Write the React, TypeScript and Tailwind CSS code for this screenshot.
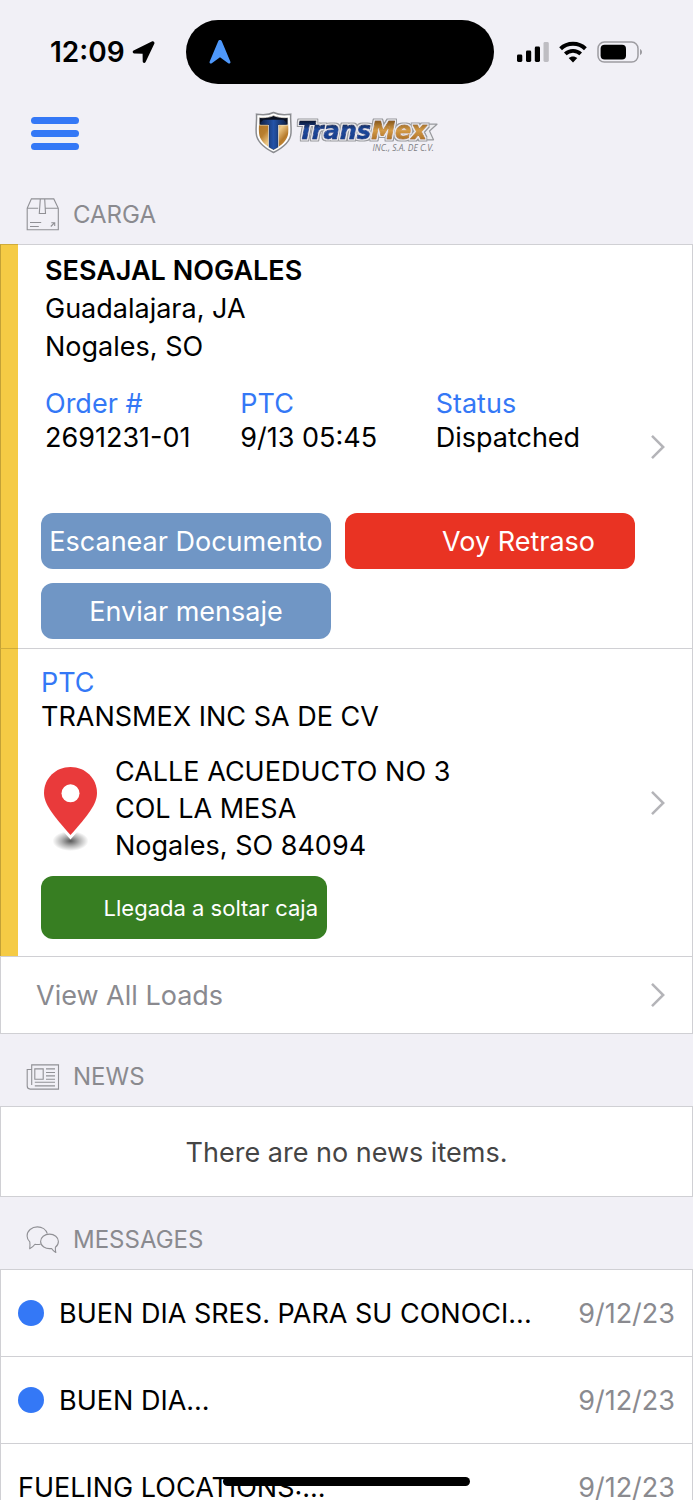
import type { ReactNode } from "react";

function LocationArrow() {
  return (
    <svg viewBox="0 0 24 24" className="h-6 w-6" fill="#000" aria-hidden="true">
      <path d="M1.600 10.600 19.800 1.400c1.700-.8 3.100.6 2.500 2.300L13.600 21.900c-.8 1.600-2.900 1.200-2.900-.7l-.1-7.400-7.800-.2c-2-.1-2.900-2-1.200-3z" />
    </svg>
  );
}

function StatusBar() {
  return (
    <div className="grid h-[94px] grid-cols-[186fr_308fr_199fr] items-start pt-5">
      <div className="flex h-16 items-center gap-[7px] pl-[50px]">
        <span className="text-[28px] font-semibold leading-8">12:09</span>
        <LocationArrow />
      </div>
      <div className="flex h-16 items-center rounded-full bg-black pl-[22px]">
        <svg viewBox="0 0 24 26" className="h-[26px] w-6" fill="#4e98fb" aria-hidden="true">
          <path d="M10.2 2.3c.5-1.700 3-1.700 3.600 0l8.600 20.400c.5 1.500-1 2.400-2.200 1.600L12 18.200l-8.200 6.100c-1.200.8-2.700-.1-2.200-1.600z" />
        </svg>
      </div>
      <div className="flex h-16 items-center gap-[10px] pl-[23px]">
        <svg viewBox="0 0 32 22" className="h-[22px] w-8" aria-hidden="true">
          <rect x="0" y="13.5" width="5.3" height="7.5" rx="1.4" />
          <rect x="9" y="9.5" width="5.2" height="11.5" rx="1.4" />
          <rect x="17.8" y="5.5" width="5.2" height="15.5" rx="1.4" />
          <rect x="26.5" y="1" width="5.3" height="20" rx="1.4" fill="#bebdc2" />
        </svg>
        <svg viewBox="0 0 28 22" className="h-[22px] w-7" fill="none" stroke="#000" aria-hidden="true">
          <path d="M1.600 7.700C8.400 1.100 19.600 1.100 26.400 7.700" strokeWidth="4" />
          <path d="M6.300 12.900c4.300-4.100 11.100-4.100 15.400 0" strokeWidth="3.800" />
          <path d="M14 21.400l-4.300-4.300c2.400-2.100 6.200-2.100 8.600 0z" fill="#000" stroke="none" />
        </svg>
        <svg viewBox="0 0 46 22" className="h-[22px] w-[46px]" aria-hidden="true">
          <rect x="1" y="1.100" width="40" height="20" rx="6.300" fill="none" stroke="#9d9ca1" strokeWidth="1.500" />
          <rect x="3.600" y="3.700" width="25.400" height="14.800" rx="4" />
          <path d="M43 8v6.200c1.200-.5 2-1.700 2-3.100s-.8-2.600-2-3.100z" fill="#9d9ca1" />
        </svg>
      </div>
    </div>
  );
}

function Logo() {
  return (
    <svg viewBox="0 0 184 44" className="h-11 w-[184px]" role="img" aria-label="TransMex Inc., S.A. de C.V.">
      <defs>
        <linearGradient id="gold" x1="0" y1="0" x2="1" y2="1">
          <stop offset="0" stopColor="#a86f22" />
          <stop offset=".35" stopColor="#b97f2f" />
          <stop offset=".55" stopColor="#edc988" />
          <stop offset=".75" stopColor="#b67a2a" />
          <stop offset="1" stopColor="#d7a558" />
        </linearGradient>
        <linearGradient id="goldText" x1="0" y1="9" x2="0" y2="28" gradientUnits="userSpaceOnUse">
          <stop offset=".1" stopColor="#8f5f20" />
          <stop offset=".55" stopColor="#d49b45" />
          <stop offset="1" stopColor="#b0752a" />
        </linearGradient>
        <linearGradient id="navyText" x1="0" y1="9" x2="0" y2="28" gradientUnits="userSpaceOnUse">
          <stop offset=".1" stopColor="#0d1c3e" />
          <stop offset=".5" stopColor="#1e4a9c" />
          <stop offset="1" stopColor="#173e8b" />
        </linearGradient>
        <linearGradient id="bar" x1="0" y1="0" x2="1" y2="0">
          <stop offset="0" stopColor="#0f2146" />
          <stop offset=".5" stopColor="#2453a8" />
          <stop offset="1" stopColor="#0f2146" />
        </linearGradient>
        <filter id="rim" x="-5%" y="-20%" width="110%" height="140%">
          <feMorphology in="SourceAlpha" operator="dilate" radius="2" result="wide" />
          <feFlood floodColor="#98999d" />
          <feComposite in2="wide" operator="in" result="outer" />
          <feMorphology in="SourceAlpha" operator="dilate" radius="1" result="narrow" />
          <feFlood floodColor="#ececef" />
          <feComposite in2="narrow" operator="in" result="inner" />
          <feMerge>
            <feMergeNode in="outer" />
            <feMergeNode in="inner" />
            <feMergeNode in="SourceGraphic" />
          </feMerge>
        </filter>
      </defs>
      <path d="M18.500 1.500C14 4 7.500 4 1.500 3.200 2 9 .7 15 1.200 22c.5 9 7.300 14.500 17.300 19.500 10-5 17-10.500 17.500-19.500.5-7-.8-13-.3-18.800C30 4 23.500 4 18.500 1.500z" fill="#fff" stroke="#8b8c90" strokeWidth="1.500" />
      <path d="M18.500 4.600C14.500 6.500 9 7 4.200 6.500c.2 5-.7 10-.2 15.500.6 7.500 6 12 14.500 17 8.500-5 14-9.500 14.700-17 .5-5.500-.4-10.500-.2-15.500C28.500 7 23 6.500 18.500 4.600z" fill="url(#gold)" />
      <path d="M18.500 4.600C14.500 6.500 9 7 4.200 6.500V14h9.300v22c1.600 1.100 3.300 2.100 5 3 1.700-.9 3.400-1.900 5-3V14H33V6.500C28.500 7 23 6.500 18.500 4.600z" fill="#0a1020" stroke="#f3f2ee" strokeWidth=".7" />
      <path d="M5.500 11.500 8.500 8.800h20l3 2.700v2H22.900v22.700l-4.400 2.400-4.400-2.400V13.500H5.500z" fill="url(#bar)" />
      <path d="M166 13.200h16L174.500 20l4 8.800H164z" fill="#ececef" stroke="#98999d" strokeWidth="1.200" strokeLinejoin="round" />
      <g filter="url(#rim)" fontFamily="DejaVu Sans" fontWeight="700" fontStyle="italic" fontSize="24" strokeLinejoin="round" strokeWidth=".9">
        <text x="43" y="27.500" fill="url(#navyText)" stroke="url(#navyText)">
          Trans
          <tspan fill="url(#goldText)" stroke="url(#goldText)">Mex</tspan>
        </text>
      </g>
      <text x="117.500" y="39.500" fontFamily="Open Sans" fontStyle="italic" fontSize="8.500" fill="#7f7f84">
        INC., S.A. DE C.V.
      </text>
    </svg>
  );
}

function BoxIcon() {
  return (
    <svg viewBox="0 0 34 34" className="h-[34px] w-[34px]" fill="none" stroke="#909095" strokeWidth="1.100" aria-hidden="true">
      <path d="M1.200 10.300 5.400.9h22.400l4.500 9.400v21.500H1.200zM1.200 10.300h11M18.800 10.300h13.500M14.300 1l-1 14.500h6.200L18.700 1M4 24.500h11.200M4 28.500h8.800M24.800 28.500l3.800-3.800M25.300 24.700h3.400v3.400" />
    </svg>
  );
}

function NewsIcon() {
  return (
    <svg viewBox="0 0 34 26" className="h-[26px] w-[34px]" fill="none" stroke="#909095" strokeWidth="1.100" aria-hidden="true">
      <path d="M5.700 21V.9h26.800v24.200H4.200c-1.900 0-3-1.100-3-3V5.500h4.500M8.800 4.900h8.400v10.300H8.800zM20 4.900h9M20 8.500h9M20 11.900h9M20 15.300h9M8.800 18.300H29M8.800 21.900H29" />
    </svg>
  );
}

function ChatIcon() {
  return (
    <svg viewBox="0 0 34 28" className="h-7 w-[34px]" fill="none" stroke="#909095" strokeWidth="1.100" strokeLinejoin="round" aria-hidden="true">
      <path d="M14.600 18.200c-1.900.4-3.800.5-5.600.1-1.300 1.800-3 3.200-5.300 4.400.3-2.600.4-4.800.1-6.800C2 14.200 1.100 12.200 1.100 9.900 1.100 4.900 5.700.9 11.400.9c4.700 0 8.700 2.800 9.900 6.800" />
      <path d="M23.500 8.100c4.900 0 8.900 3.200 8.900 7.300 0 2.400-1.200 4.400-3 5.800-.1 1.800 0 3.400.4 5.300-1.700-1-3.200-2.300-4.200-4-6.200.9-11-2.600-11-7.100 0-4.100 4-7.300 8.900-7.300z" />
    </svg>
  );
}

function PinIcon() {
  return (
    <svg viewBox="0 0 60 88" className="h-[88px] w-[60px]" aria-hidden="true">
      <defs>
        <radialGradient id="pinShadow">
          <stop offset="0" stopColor="#000" stopOpacity=".65" />
          <stop offset=".5" stopColor="#000" stopOpacity=".3" />
          <stop offset="1" stopColor="#000" stopOpacity="0" />
        </radialGradient>
      </defs>
      <ellipse cx="29.500" cy="76" rx="18" ry="10" fill="url(#pinShadow)" />
      <path d="M29.500 2C14.500 2 3 13.500 3 28c0 11 9 22.500 26.500 42C47 50.500 56 39 56 28 56 13.500 44.500 2 29.500 2z" fill="#e93a3b" stroke="#fff" strokeWidth="6" paintOrder="stroke" />
      <circle cx="29.500" cy="28.300" r="9" fill="#fff" />
    </svg>
  );
}

function Chevron() {
  return (
    <svg viewBox="0 0 16 26" className="h-[26px] w-4 shrink-0" fill="none" stroke="#b4b4b8" strokeWidth="2.500" aria-hidden="true">
      <path d="M2 1.800 13.200 13 2 24.200" />
    </svg>
  );
}

function SectionTitle({ icon, children }: { icon: ReactNode; children: ReactNode }) {
  return (
    <div className="flex h-[72px] items-center gap-[13px] pl-[26px] pt-[14px] text-[#8a8a8f]">
      {icon}
      <h2 className="text-[24px] leading-8">{children}</h2>
    </div>
  );
}

function LoadRow({ children }: { children: ReactNode }) {
  return (
    <div className="flex">
      <div className="w-[18px] shrink-0 border-l border-t border-l-black/20 border-t-black/15 bg-[#f5cb45]" />
      <div className="flex min-w-0 flex-1 items-center border-r border-t border-[#d0d0d4] bg-white pl-[23px] pr-[26px]">
        <div className="min-w-0 flex-1">{children}</div>
        <a href="#details" aria-label="Details" className="pl-[15px]">
          <Chevron />
        </a>
      </div>
    </div>
  );
}

const details = [
  { label: "Order #", value: "2691231-01" },
  { label: "PTC", value: "9/13 05:45" },
  { label: "Status", value: "Dispatched" },
];

const messages = [
  { title: "BUEN DIA SRES. PARA SU CONOCI...", date: "9/12/23", unread: true },
  { title: "BUEN DIA...", date: "9/12/23", unread: true },
  { title: "FUELING LOCATIONS:...", date: "9/12/23", unread: false },
];

export default function App() {
  return (
    <div className="relative h-screen overflow-hidden bg-[#f1f0f6] font-['Inter',sans-serif] text-[27px] text-black">
      <StatusBar />
      <header className="grid h-[78px] grid-cols-[1fr_auto_1fr] items-center px-[31px]">
        <button type="button" aria-label="Menu" className="flex w-12 flex-col gap-[6px]">
          <span className="h-[7px] w-full rounded-full bg-[#3478f6]" />
          <span className="h-[7px] w-full rounded-full bg-[#3478f6]" />
          <span className="h-[7px] w-full rounded-full bg-[#3478f6]" />
        </button>
        <Logo />
      </header>

      <main>
        <section>
          <SectionTitle icon={<BoxIcon />}>CARGA</SectionTitle>
          <LoadRow>
            <div className="px-1 pt-[7px]">
              <h3 className="font-semibold leading-[38px]">SESAJAL NOGALES</h3>
              <p className="leading-[38px]">Guadalajara, JA</p>
              <p className="leading-[38px]">Nogales, SO</p>
              <dl className="mt-[21px] grid grid-cols-3 leading-[34px]">
                {details.map((d) => (
                  <div key={d.label}>
                    <dt className="text-[#3478f6]">{d.label}</dt>
                    <dd className="whitespace-nowrap">{d.value}</dd>
                  </div>
                ))}
              </dl>
            </div>
            <div className="mb-[9px] mt-[58px] grid grid-cols-2 gap-[14px] text-white">
              <button type="button" className="h-14 whitespace-nowrap rounded-xl bg-[#7096c5] pt-[2px]">Escanear Documento</button>
              <button type="button" className="h-14 rounded-xl bg-[#e93323] pr-10 pt-[2px] text-right">Voy Retraso</button>
              <button type="button" className="h-14 rounded-xl bg-[#7096c5] pt-[2px]">Enviar mensaje</button>
            </div>
          </LoadRow>
          <LoadRow>
            <div className="pt-[17px] leading-[34px]">
              <p className="text-[#3478f6]">PTC</p>
              <p>TRANSMEX INC SA DE CV</p>
            </div>
            <div className="mt-[19px] flex items-center gap-[14px]">
              <PinIcon />
              <address className="not-italic leading-[37px]">
                CALLE ACUEDUCTO NO 3
                <br />
                COL LA MESA
                <br />
                Nogales, SO 84094
              </address>
            </div>
            <button type="button" className="mb-[17px] mt-3 block h-[63px] w-[286px] rounded-xl bg-[#377e22] pr-[9px] pt-[2px] text-right text-[22px] text-white">
              Llegada a soltar caja
            </button>
          </LoadRow>
          <a href="#loads" className="flex h-[78px] items-center justify-between border border-[#d0d0d4] bg-white pl-[35px] pr-[26px] text-[#8a8a8f]">
            <span className="pt-[3px]">View All Loads</span>
            <Chevron />
          </a>
        </section>

        <section>
          <SectionTitle icon={<NewsIcon />}>NEWS</SectionTitle>
          <p className="flex h-[91px] items-center justify-center border border-[#d0d0d4] bg-white pt-[3px] text-[#454545]">
            There are no news items.
          </p>
        </section>

        <section>
          <SectionTitle icon={<ChatIcon />}>MESSAGES</SectionTitle>
          <ul>
            {messages.map((m) => (
              <li key={m.title} className="border-x border-t border-[#d0d0d4] bg-white">
                <a href="#message" className="flex h-[86px] items-center px-[17px]">
                  {m.unread && <span className="mr-[15px] h-[26px] w-[26px] shrink-0 rounded-full bg-[#3478f6]" />}
                  <span className="min-w-0 flex-1 truncate pt-[2px]">{m.title}</span>
                  <time className="pt-[2px] text-[#8a8a8f]">{m.date}</time>
                </a>
              </li>
            ))}
          </ul>
        </section>
      </main>

      <div className="absolute inset-x-0 bottom-[14px] flex justify-center">
        <div className="h-[9px] w-[247px] rounded-full bg-black" />
      </div>
    </div>
  );
}
